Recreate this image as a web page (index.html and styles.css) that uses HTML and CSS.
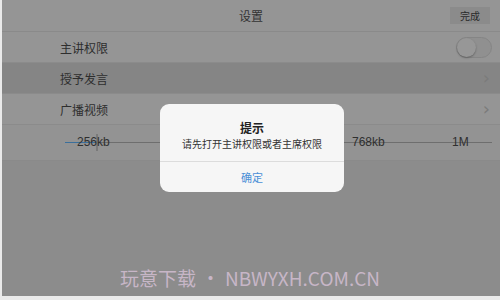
FILE: index.html
```html
<!DOCTYPE html>
<html>
<head>
<meta charset="utf-8">
<link rel="stylesheet" href="styles.css">
</head>
<body>
<div class="screen">
  <div class="header">
    <div class="title">设置</div>
    <div class="done">完成</div>
  </div>
  <div class="row">
    <span class="label">主讲权限</span>
    <span class="toggle"><span class="knob"></span></span>
  </div>
  <div class="row dark">
    <span class="label">授予发言</span>
    <span class="chev">›</span>
  </div>
  <div class="row">
    <span class="label">广播视频</span>
    <span class="chev">›</span>
  </div>
  <div class="slider">
    <div class="track"></div>
    <div class="fill"></div>
    <div class="tick"></div>
    <span class="mark m1">256kb</span>
    <span class="mark m2">768kb</span>
    <span class="mark m3">1M</span>
  </div>
  <div class="rest">
    <div class="wm">玩意下载<span class="dot">•</span>NBWYXH.COM.CN</div>
  </div>
  <div class="dialog">
    <div class="dbody">
      <div class="dtitle">提示</div>
      <div class="dmsg">请先打开主讲权限或者主席权限</div>
    </div>
    <div class="dbtn">确定</div>
  </div>
</div>
</body>
</html>
```
FILE: styles.css
```css
html, body { margin: 0; padding: 0; }
body { width: 500px; height: 300px; overflow: hidden; background: #eaeaea; font-family: "Noto Sans CJK SC", "Liberation Sans", sans-serif; }
.screen { position: relative; width: 498px; height: 296px; margin-left: 2px; background: #8d8d8d; display: flex; flex-direction: column; }
.header { height: 32px; display: flex; align-items: center; justify-content: center; position: relative; background: #959595; border-bottom: 1px solid #8a8a8a; box-sizing: border-box; }
.title { font-size: 12px; color: #333; }
.done { position: absolute; right: 10px; top: 7px; width: 40px; height: 17px; background: #8b8b8b; font-size: 10px; color: #2a2a2a; display: flex; align-items: center; justify-content: center; }
.row { height: 30px; display: flex; align-items: center; justify-content: space-between; padding: 0 10px 0 58px; background: #959595; border-bottom: 1px solid #8b8b8b; }
.row.dark { background: #858585; }
.label { font-size: 12px; color: #2e2e2e; }
.chev { font-size: 18px; color: #7b7b7b; font-family: "DejaVu Sans", sans-serif; line-height: 1; }
.toggle { width: 36px; height: 21px; border-radius: 11px; background: #909090; border: 1px solid #858585; position: relative; box-sizing: border-box; margin-right: -2px; }
.knob { position: absolute; left: 0; top: 0; width: 19px; height: 19px; border-radius: 50%; background: #979797; box-shadow: 0 1px 2px rgba(0,0,0,0.3); }
.slider { height: 35px; position: relative; background: #939393; border-bottom: 1px solid #8a8a8a; }
.track { position: absolute; left: 63px; right: 8px; top: 17px; height: 1px; background: #6e6e6e; }
.fill { position: absolute; left: 63px; width: 32px; top: 17px; height: 1px; background: #3b6f9b; }
.tick { position: absolute; left: 94px; top: 9px; width: 2px; height: 17px; background: #7a7a7a; }
.mark { position: absolute; top: 10px; font-size: 12px; line-height: 14px; color: #2f2f2f; font-family: "Liberation Sans", sans-serif; }
.m1 { left: 75px; }
.m2 { left: 350px; }
.m3 { left: 450px; }
.rest { flex: 1; background: #8c8c8c; display: flex; align-items: flex-end; justify-content: center; padding-bottom: 6px; }
.wm { font-size: 19px; color: #c7b6c7; font-family: "Noto Sans CJK SC", "Open Sans", sans-serif; line-height: 1.2; margin-left: -2px; }
.dot { margin: 0 5px; }
.dialog { position: absolute; left: 158px; top: 104px; width: 184px; height: 88px; background: #f6f6f6; border-radius: 9px; display: flex; flex-direction: column; overflow: hidden; }
.dbody { height: 58px; display: flex; flex-direction: column; align-items: center; justify-content: center; border-bottom: 1px solid #dcdcdc; padding-top: 4px; box-sizing: border-box; }
.dtitle { font-size: 12px; font-weight: bold; color: #222; line-height: 16px; }
.dmsg { font-size: 10px; color: #333; line-height: 13px; margin-top: 1px; }
.dbtn { flex: 1; display: flex; align-items: center; justify-content: center; font-size: 11px; color: #4a8fd6; }
```
